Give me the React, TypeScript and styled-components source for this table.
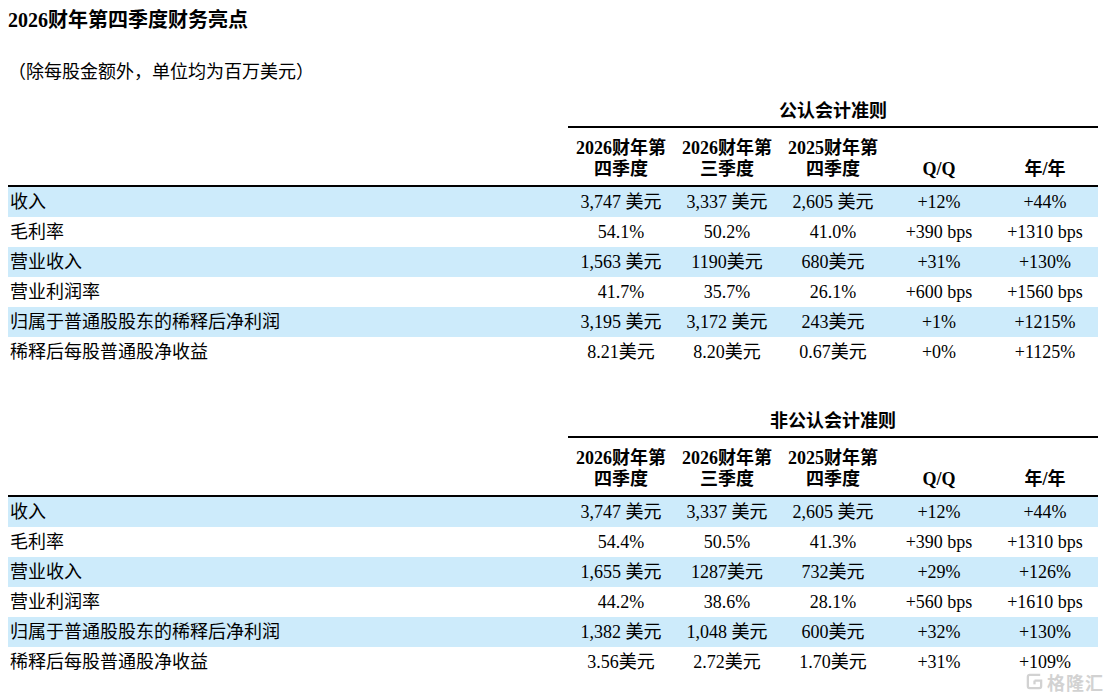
import React from 'react';
import styled, { createGlobalStyle } from 'styled-components';

const GlobalStyle = createGlobalStyle`
  html, body {
    margin: 0;
    padding: 0;
    background: #ffffff;
  }
  body {
    font-family: "Liberation Serif", "Noto Sans CJK SC", serif;
    color: #000000;
  }
`;

// --- Page ---

const Page = styled.div`
  position: relative;
  width: 1110px;
  height: 696px;
  padding: 0 12px 0 8px;
  box-sizing: border-box;
  overflow: hidden;
`;

const Title = styled.h1`
  margin: 0;
  height: 40px;
  line-height: 40px;
  font-size: 20px;
  font-weight: bold;
`;

const Subtitle = styled.p`
  margin: 20px 0 12px;
  height: 24px;
  line-height: 24px;
  font-size: 18px;
`;

// --- Table ---

const Section = styled.section<{ $gap?: number }>`
  margin-top: ${({ $gap }) => $gap ?? 0}px;
  display: grid;
  grid-template-columns: 560px repeat(5, 106px);
  font-size: 18px;
`;

const GroupTitle = styled.div`
  grid-column: 2 / span 5;
  height: 30px;
  line-height: 30px;
  text-align: center;
  font-weight: bold;
  border-bottom: 2px solid #000;
`;

const HeadRow = styled.div`
  grid-column: 1 / -1;
  display: grid;
  grid-template-columns: subgrid;
  height: 57px;
  border-bottom: 2px solid #000;
`;

const HeadCell = styled.div`
  display: flex;
  flex-direction: column;
  justify-content: flex-end;
  align-items: center;
  padding-bottom: 5px;
  line-height: 21px;
  font-weight: bold;
  white-space: nowrap;
`;

const Row = styled.div<{ $shaded: boolean }>`
  grid-column: 1 / -1;
  display: grid;
  grid-template-columns: subgrid;
  height: 30px;
  line-height: 30px;
  background: ${({ $shaded }) => ($shaded ? '#cdebfb' : 'transparent')};
`;

const Label = styled.div`
  padding-left: 2px;
  white-space: nowrap;
`;

const Value = styled.div`
  text-align: center;
  white-space: nowrap;
`;

// --- Watermark ---

const Watermark = styled.div`
  position: absolute;
  right: 6px;
  bottom: 5px;
  display: flex;
  align-items: center;
  gap: 3px;
  color: #d2d2d2;
  font-family: "Noto Sans CJK SC", sans-serif;
  font-size: 18px;
  line-height: 18px;
  font-weight: bold;
  letter-spacing: 1px;
`;

type Line = { label: string; values: string[] };

const headers: string[][] = [
  ['2026财年第', '四季度'],
  ['2026财年第', '三季度'],
  ['2025财年第', '四季度'],
  ['Q/Q'],
  ['年/年'],
];

const gaap: Line[] = [
  { label: '收入', values: ['3,747 美元', '3,337 美元', '2,605 美元', '+12%', '+44%'] },
  { label: '毛利率', values: ['54.1%', '50.2%', '41.0%', '+390 bps', '+1310 bps'] },
  { label: '营业收入', values: ['1,563 美元', '1190美元', '680美元', '+31%', '+130%'] },
  { label: '营业利润率', values: ['41.7%', '35.7%', '26.1%', '+600 bps', '+1560 bps'] },
  { label: '归属于普通股股东的稀释后净利润', values: ['3,195 美元', '3,172 美元', '243美元', '+1%', '+1215%'] },
  { label: '稀释后每股普通股净收益', values: ['8.21美元', '8.20美元', '0.67美元', '+0%', '+1125%'] },
];

const nonGaap: Line[] = [
  { label: '收入', values: ['3,747 美元', '3,337 美元', '2,605 美元', '+12%', '+44%'] },
  { label: '毛利率', values: ['54.4%', '50.5%', '41.3%', '+390 bps', '+1310 bps'] },
  { label: '营业收入', values: ['1,655 美元', '1287美元', '732美元', '+29%', '+126%'] },
  { label: '营业利润率', values: ['44.2%', '38.6%', '28.1%', '+560 bps', '+1610 bps'] },
  { label: '归属于普通股股东的稀释后净利润', values: ['1,382 美元', '1,048 美元', '600美元', '+32%', '+130%'] },
  { label: '稀释后每股普通股净收益', values: ['3.56美元', '2.72美元', '1.70美元', '+31%', '+109%'] },
];

const ResultsTable: React.FC<{ title: string; lines: Line[]; gap?: number }> = ({ title, lines, gap }) => (
  <Section $gap={gap}>
    <GroupTitle>{title}</GroupTitle>
    <HeadRow>
      <div />
      {headers.map((h, i) => (
        <HeadCell key={i}>
          {h.map((t) => (
            <span key={t}>{t}</span>
          ))}
        </HeadCell>
      ))}
    </HeadRow>
    {lines.map((line, i) => (
      <Row key={line.label} $shaded={i % 2 === 0}>
        <Label>{line.label}</Label>
        {line.values.map((v, j) => (
          <Value key={j}>{v}</Value>
        ))}
      </Row>
    ))}
  </Section>
);

const App: React.FC = () => (
  <>
    <GlobalStyle />
    <Page>
      <Title>2026财年第四季度财务亮点</Title>
      <Subtitle>（除每股金额外，单位均为百万美元）</Subtitle>
      <ResultsTable title="公认会计准则" lines={gaap} />
      <ResultsTable title="非公认会计准则" lines={nonGaap} gap={39} />
      <Watermark>
        <svg width="19" height="19" viewBox="0 0 20 20" fill="none" stroke="#d2d2d2" strokeWidth="2.4">
          <path d="M16 3H5a2 2 0 0 0-2 2v10a2 2 0 0 0 2 2h10a2 2 0 0 0 2-2V9h-7" />
          <path d="M10 9v4" />
        </svg>
        格隆汇
      </Watermark>
    </Page>
  </>
);

export default App;
